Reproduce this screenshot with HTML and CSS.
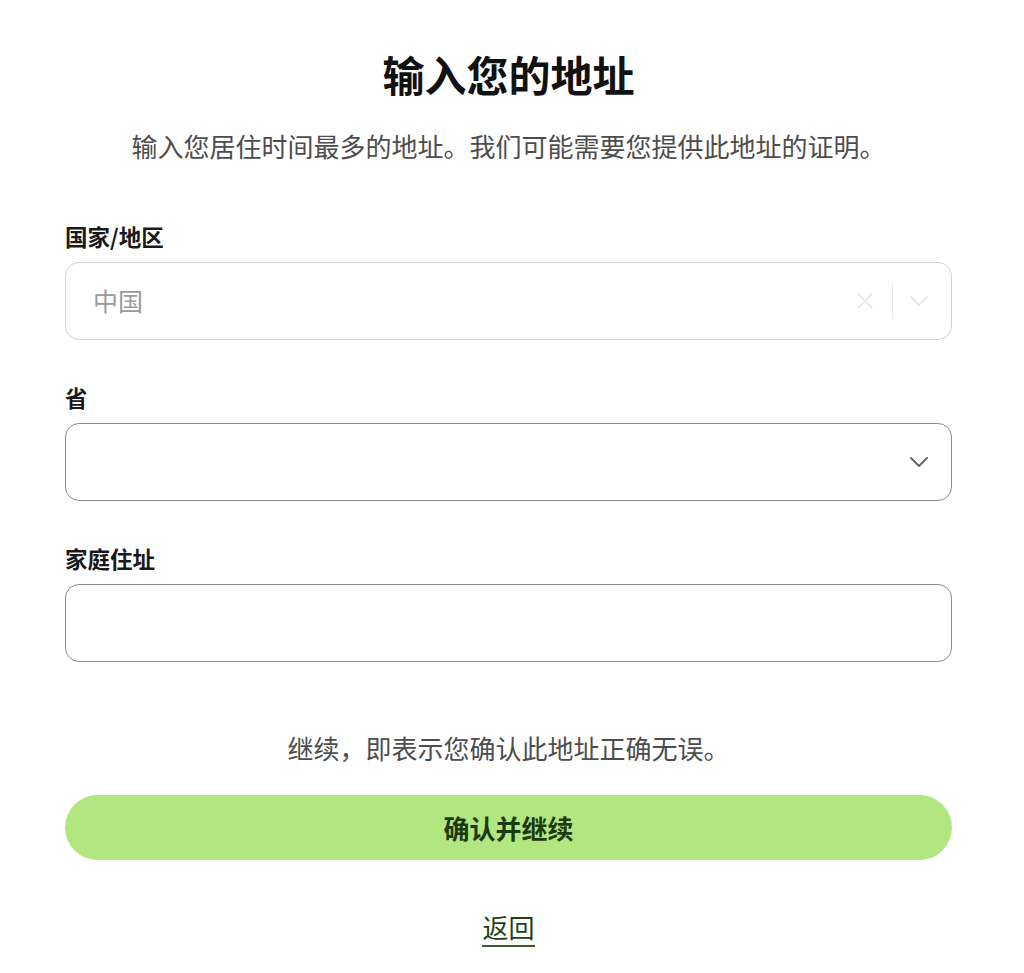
FILE: index.html
```html
<!DOCTYPE html>
<html lang="zh-CN">
<head>
<meta charset="utf-8">
<title>输入您的地址</title>
<link rel="stylesheet" href="styles.css">
</head>
<body>
<main class="page">
  <h1 class="title">输入您的地址</h1>
  <p class="subtitle">输入您居住时间最多的地址。我们可能需要您提供此地址的证明。</p>

  <div class="field">
    <label class="label">国家/地区</label>
    <div class="control control-disabled">
      <span class="value">中国</span>
      <span class="icons">
        <svg class="icon-x" width="18" height="18" viewBox="0 0 18 18"><path d="M2 2 L16 16 M16 2 L2 16" stroke="#e6e6e6" stroke-width="1.6" fill="none" stroke-linecap="round"/></svg>
        <span class="sep"></span>
        <svg class="icon-chev" width="20" height="12" viewBox="0 0 20 12"><path d="M2 2 L10 10 L18 2" stroke="#e0e0e0" stroke-width="1.6" fill="none" stroke-linecap="round" stroke-linejoin="round"/></svg>
      </span>
    </div>
  </div>

  <div class="field">
    <label class="label">省</label>
    <div class="control">
      <span class="value"></span>
      <span class="icons">
        <svg class="icon-chev" width="20" height="12" viewBox="0 0 20 12"><path d="M2 2 L10 10 L18 2" stroke="#666" stroke-width="2" fill="none" stroke-linecap="round" stroke-linejoin="round"/></svg>
      </span>
    </div>
  </div>

  <div class="field">
    <label class="label">家庭住址</label>
    <div class="control"></div>
  </div>

  <p class="note">继续，即表示您确认此地址正确无误。</p>
  <button class="btn" type="button">确认并继续</button>
  <div class="back-wrap"><a class="back" href="#">返回</a></div>
</main>
</body>
</html>
```

FILE: styles.css
```css
html, body {
  margin: 0;
  padding: 0;
  background: #fff;
}
body {
  font-family: "Noto Sans CJK SC", "Noto Sans", sans-serif;
  color: #1a1a1a;
}
.page {
  width: 887px;
  margin-left: 65px;
  padding-top: 46px;
  display: flex;
  flex-direction: column;
}
.title {
  margin: 0;
  font-size: 42px;
  line-height: 56px;
  font-weight: 700;
  text-align: center;
  color: #111;
}
.subtitle {
  margin: 26px 0 0;
  font-size: 26px;
  line-height: 36px;
  text-align: center;
  color: #4d4d4d;
}
.field {
  display: flex;
  flex-direction: column;
  margin-top: 42px;
}
.field:first-of-type {
  margin-top: 57px;
}
.label {
  font-size: 22.5px;
  line-height: 30px;
  font-weight: 700;
  color: #1a1a1a;
  margin-bottom: 11px;
}
.control {
  box-sizing: border-box;
  height: 78px;
  border: 1.5px solid #8c8c8c;
  border-radius: 14px;
  display: flex;
  align-items: center;
  padding: 0 22px 0 27px;
}
.control-disabled {
  border-color: #d2d2d2;
}
.value {
  flex: 1;
  font-size: 25px;
  color: #9a9a9a;
  padding-bottom: 3px;
}
.icons {
  display: flex;
  align-items: center;
}
.icon-x {
  margin-right: 18px;
}
.sep {
  width: 1px;
  height: 36px;
  background: #ececec;
  margin-right: 16px;
}
.note {
  margin: 68px 0 0;
  font-size: 26px;
  line-height: 36px;
  text-align: center;
  color: #4d4d4d;
}
.btn {
  margin-top: 29px;
  height: 65px;
  border: none;
  border-radius: 33px;
  background: #b1e681;
  font-family: inherit;
  font-size: 26px;
  font-weight: 700;
  color: #1d3a10;
  cursor: pointer;
}
.back-wrap {
  margin-top: 52px;
  text-align: center;
}
.back {
  display: inline-block;
  font-size: 26px;
  line-height: 30px;
  color: #243f16;
  text-decoration: none;
  border-bottom: 2px solid #3d5a2a;
  padding-bottom: 3px;
}
```
